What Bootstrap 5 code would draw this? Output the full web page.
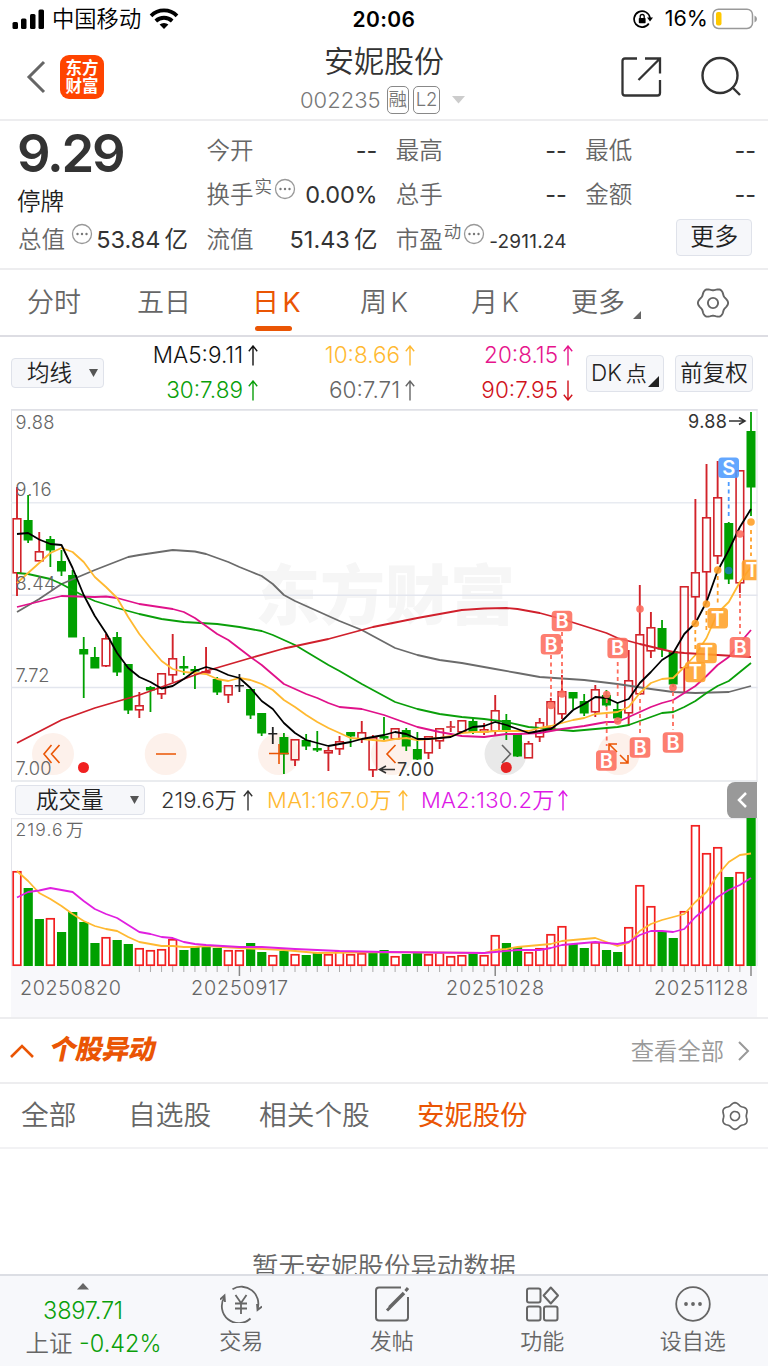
<!DOCTYPE html>
<html lang="zh-CN">
<head>
<meta charset="utf-8">
<meta name="viewport" content="width=device-width, initial-scale=1">
<title>安妮股份 002235</title>
<link href="https://cdn.jsdelivr.net/npm/bootstrap@5.3.0/dist/css/bootstrap.min.css" rel="stylesheet">
<style>
:root{--ink:#333;--mute:#666;--accent:#ea5504;--up:#d2232a;--down:#00a000}
body{width:768px;height:1366px;overflow:hidden;background:#fff;color:var(--ink);font-family:Inter,"Noto Sans CJK SC",sans-serif;font-weight:350;font-size:24px;line-height:1;white-space:nowrap}
svg{display:block;flex:none}
.status-row{height:38px;padding:0 10px 0 12px;color:#000;font-size:21px}
.side{width:250px}
.clock{font-weight:600;font-size:21px;letter-spacing:.4px;position:relative;left:-1px}
.title-row{height:83px;border-bottom:2px solid #ededef}
.logo{width:44px;height:44px;border-radius:9px;background:#ff4400;color:#fff;font-size:16.5px;line-height:18px;font-weight:700;padding-top:4px;margin-left:12px}
.logo span{display:block;height:18px}
.name{font-size:30px;line-height:34px}
.code{font-size:22px;letter-spacing:0;color:#777}
.tagbox{height:28px;border:1.5px solid #888;border-radius:5px;font-size:18.5px;color:#777;letter-spacing:0}
.quote{height:149px;border-bottom:2px solid #ededef;padding:7px 12px 0 18px;display:grid;grid-template-columns:170px 171px 171px 171px;column-gap:18.4px;grid-auto-flow:column;grid-template-rows:44.5px 44.5px 44.5px}
.quote>div{display:flex;align-items:center;justify-content:space-between}
.lbl{color:var(--mute);font-size:23.5px}
.num{font-size:23.5px;font-weight:400}
.big{font-size:52.5px;font-weight:600;letter-spacing:-2.2px;padding-top:6px;margin-left:-1px}
.sup{font-size:17.5px;color:var(--mute);position:relative;top:-8px;margin-left:1px}
.softbtn{border:1.5px solid #dfe2ea;background:#f6f7fa;border-radius:4px;color:#222}
.period{height:67px;border-bottom:2px solid #dddde3;padding-left:27px;font-size:27px;color:var(--mute);word-spacing:-4px}
.period .on{color:var(--accent);position:relative;font-weight:400}
.period .on::after{content:"";position:absolute;left:3px;bottom:-12px;width:37px;height:5.5px;border-radius:3px;background:var(--accent)}
.ma{width:469px;height:72px;display:grid;grid-template-columns:154px 157px 158px;grid-template-rows:35px 35px;padding-top:1px;font-size:22.5px;letter-spacing:0}
.ma>div{display:flex;align-items:center;justify-content:flex-end;gap:5px}
.volhead{height:36px;padding:0 11px 0 15px;font-size:22px}
.volhead .stat{display:flex;align-items:center;justify-content:space-between}
.sect{height:67px;border-top:2px solid #ededef;border-bottom:2px solid #ededef;padding:0 17px 0 10px}
.sect h2{font-size:27px;font-weight:900;color:var(--accent);transform:skewX(-12deg);letter-spacing:-.6px}
.news{height:65px;border-bottom:2px solid #f2f2f4;padding:0 18px 0 21px;font-size:27.7px;color:var(--mute)}
.empty{height:125px;padding-top:104px;overflow:hidden;color:var(--mute);font-size:26.4px}
.dock{height:93px;background:#f7f8fb;border-top:2px solid #dcdee4;color:var(--mute);font-size:22px}
.dock .item{width:150.5px;padding-top:9px}
.dock .item div{margin-top:7px}
.dock .idx{width:166px;padding-top:6px}
.chart text{font-family:Inter,"Noto Sans CJK SC",sans-serif;font-weight:400}
</style>
</head>
<body>
<svg width="0" height="0" class="position-absolute">
  <symbol id="up" viewBox="0 0 10 21"><path d="M5 20.5V1M.8 6.2 5 1l4.200 5.200" fill="none" stroke="currentColor" stroke-width="1.400"/></symbol>
  <symbol id="dn" viewBox="0 0 10 21"><path d="M5 .5V20M.8 14.800 5 20l4.200-5.200" fill="none" stroke="currentColor" stroke-width="1.400"/></symbol>
  <symbol id="more" viewBox="0 0 22 22"><circle cx="11" cy="11" r="9.500" fill="none" stroke="#999" stroke-width="1.300"/><g fill="#777"><circle cx="6.500" cy="11" r="1.200"/><circle cx="11" cy="11" r="1.200"/><circle cx="15.500" cy="11" r="1.200"/></g></symbol>
  <symbol id="gear" viewBox="-16 -16 32 32"><path id="gearPath" fill="none" stroke="currentColor" stroke-width="1.800"/><circle r="4.800" fill="none" stroke="currentColor" stroke-width="1.800"/></symbol>
</svg>

<header>
  <div class="status-row d-flex align-items-center justify-content-between">
    <div class="side d-flex align-items-center">
      <svg width="33" height="20" viewBox="0 0 33 20"><rect x=".5" y="13" width="5.500" height="7" rx="1.500"/><rect x="9" y="9.500" width="5.500" height="10.500" rx="1.500"/><rect x="18" y="5" width="5.500" height="15" rx="1.500"/><rect x="26.500" y=".5" width="5.500" height="19.500" rx="1.500"/></svg>
      <span style="font-size:22.300px;margin-left:7px">中国移动</span>
      <svg class="ms-2" width="30" height="22" viewBox="0 0 30 22"><g fill="none" stroke="#000" stroke-width="3.800"><path d="M2 7.800a18.500 18.500 0 0 1 26 0"/><path d="M6.800 13a12 12 0 0 1 16.400 0"/></g><path d="M10.600 16.600a6.600 6.600 0 0 1 8.800 0L15 21z"/></svg>
    </div>
    <div class="clock">20:06</div>
    <div class="side d-flex align-items-center justify-content-end">
      <svg width="20" height="18" viewBox="0 0 20 18"><path d="M15.800 13.500A8 8 0 1 1 17 8" fill="none" stroke="#000" stroke-width="1.700"/><path d="M14 7.500h6l-3 4z"/><rect x="5.800" y="8" width="6.800" height="5.300" rx=".7"/><path d="M7.200 8V6.500a2 2 0 0 1 4 0V8" fill="none" stroke="#000" stroke-width="1.300"/></svg>
      <span class="ms-2 ps-1" style="font-weight:400;font-size:21.500px">16%</span>
      <svg class="ms-1" width="46" height="22" viewBox="0 0 46 22"><rect x="1" y="1.200" width="39.500" height="19.300" rx="5.500" fill="none" stroke="#999" stroke-width="1.500"/><rect x="4" y="4" width="5.500" height="13.500" rx="2" fill="#ffc800"/><path d="M42.500 7.500q2.500 1 2.500 3.500t-2.500 3.500z" fill="#999"/></svg>
    </div>
  </div>
  <div class="title-row d-flex align-items-center justify-content-between ps-4 pe-4">
    <div class="d-flex align-items-center pb-1" style="width:220px">
      <svg width="24" height="36" viewBox="0 0 24 36"><path d="M20 3 5 18l15 15" fill="none" stroke="#666" stroke-width="3"/></svg>
      <div class="logo text-center"><span>东方</span><span>财富</span></div>
    </div>
    <div class="text-center">
      <div class="name">安妮股份</div>
      <div class="code d-flex align-items-center justify-content-center mt-2">002235
        <span class="tagbox d-flex align-items-center" style="padding:0 1px;margin-left:6px">融</span><span class="tagbox d-flex align-items-center justify-content-center ms-1" style="width:27px">L2</span>
        <svg class="ms-2" width="20" height="8" viewBox="0 0 20 8"><path d="M4 0h13l-6.500 7.500z" fill="#ccc"/></svg>
      </div>
    </div>
    <div class="d-flex align-items-center justify-content-end gap-4 pb-1" style="width:220px">
      <svg width="42" height="42" viewBox="0 0 42 42" fill="none" stroke="#333" stroke-width="2.300"><path d="M17 2.500H5Q2.500 2.500 2.500 5v32q0 2.500 2.500 2.500h32.500q2.500 0 2.500-2.500V24M25 2.500h15v15M40 2.500 18.500 24"/></svg>
      <svg style="margin:0 2px 0 14px" width="42" height="42" viewBox="0 0 42 42" fill="none" stroke="#333" stroke-width="2.400"><circle cx="20" cy="19.500" r="17.500"/><path d="m32 31 8 8"/></svg>
    </div>
  </div>
</header>

<section class="quote">
  <div class="big">9.29</div>
  <div style="color:#222;font-size:23.500px;padding-top:14px;margin-left:-1px">停牌</div>
  <div><span class="lbl">总值</span><svg style="margin:0 0 11px 6px" width="22" height="22"><use href="#more"/></svg><span class="num ms-auto">53.84<span class="ps-1">亿</span></span></div>
  <div><span class="lbl">今开</span><span class="num">--</span></div>
  <div><span class="lbl">换手</span><span class="sup">实</span><svg style="margin:0 0 11px 2px" width="22" height="22"><use href="#more"/></svg><span class="num ms-auto" style="letter-spacing:-.2px">0.00%</span></div>
  <div><span class="lbl">流值</span><span class="num">51.43<span class="ps-1">亿</span></span></div>
  <div><span class="lbl">最高</span><span class="num">--</span></div>
  <div><span class="lbl">总手</span><span class="num">--</span></div>
  <div><span class="lbl">市盈</span><span class="sup">动</span><svg style="margin:0 0 11px 2px" width="22" height="22"><use href="#more"/></svg><span class="num ms-auto pt-1" style="font-size:19px;letter-spacing:.2px">-2911.24</span></div>
  <div><span class="lbl">最低</span><span class="num">--</span></div>
  <div><span class="lbl">金额</span><span class="num">--</span></div>
  <div style="justify-content:flex-end"><span class="softbtn d-flex align-items-center justify-content-center me-1" style="width:76px;height:37px;margin-bottom:4px">更多</span></div>
</section>

<nav class="period d-flex align-items-center">
  <span style="width:110px">分时</span><span style="width:115px">五日</span><span style="width:108px"><span class="on">日 K</span></span><span style="width:111px">周 K</span><span style="width:100px">月 K</span><span>更多</span>
  <svg class="ms-2 mt-4" width="8" height="8"><path d="M8 0v8H0z" fill="#666"/></svg>
  <svg width="34" height="34" style="margin-left:55px"><use href="#gear"/></svg>
</nav>

<section class="d-flex align-items-center" style="height:72px;padding:0 11px">
  <span class="softbtn d-flex align-items-center justify-content-between" style="width:93px;height:30px;padding:0 4px 0 15px;font-size:22.500px">均线<svg width="11" height="9"><path d="M1 0h9l-4.500 8z" fill="#555"/></svg></span>
  <div class="ma">
    <div style="color:#111">MA5:9.11<svg width="10" height="21"><use href="#up"/></svg></div>
    <div style="color:#ffb931">10:8.66<svg width="10" height="21"><use href="#up"/></svg></div>
    <div style="color:#e6148c">20:8.15<svg width="10" height="21"><use href="#up"/></svg></div>
    <div style="color:#0a9f0a">30:7.89<svg width="10" height="21"><use href="#up"/></svg></div>
    <div style="color:#666">60:7.71<svg width="10" height="21"><use href="#up"/></svg></div>
    <div style="color:#d0121b">90:7.95<svg width="10" height="21"><use href="#dn"/></svg></div>
  </div>
  <span class="softbtn d-flex align-items-center position-relative" style="width:78px;height:37px;margin-left:13px;padding-left:4px;font-size:22.500px">DK<span style="font-size:21px;padding-left:4px">点</span><svg class="position-absolute bottom-0 end-0 mb-1 me-1" width="11" height="11"><path d="M11 0v11H0z" fill="#222"/></svg></span>
  <span class="softbtn d-flex align-items-center justify-content-center" style="width:78px;height:37px;margin-left:11px;font-size:22.500px">前复权</span>
</section>

<svg id="price" class="chart" width="768" height="373" viewBox="0 409 768 373"></svg>

<section class="volhead d-flex align-items-center">
  <span class="softbtn d-flex align-items-center justify-content-between" style="width:130px;height:30px;padding:0 4px 0 20px;font-size:22.500px">成交量<svg width="11" height="9"><path d="M1 0h9l-4.500 8z" fill="#555"/></svg></span>
  <span class="stat" style="margin-left:16px;width:92px">219.6万<svg width="10" height="21"><use href="#up"/></svg></span>
  <span class="stat" style="margin-left:14px;width:141px;letter-spacing:.35px;color:#ffb931">MA1:167.0万<svg width="10" height="21"><use href="#up"/></svg></span>
  <span class="stat" style="margin-left:13px;width:147px;letter-spacing:.25px;color:#dd18e6">MA2:130.2万<svg width="10" height="21"><use href="#up"/></svg></span>
  <span class="ms-auto d-flex align-items-center justify-content-center" style="width:30px;height:37px;background:#999;border-radius:8px 0 0 8px"><svg width="12" height="18"><path d="M10 2 3 9l7 7" fill="none" stroke="#fff" stroke-width="2.500"/></svg></span>
</section>

<svg id="volume" class="chart" width="768" height="199" viewBox="0 818 768 199"></svg>

<section class="sect d-flex align-items-center">
  <svg width="24" height="16" viewBox="0 0 24 16"><path d="m1 14 11-11 11 11" fill="none" stroke="#ea5504" stroke-width="2.600"/></svg>
  <h2 class="mb-0" style="margin-left:16px">个股异动</h2>
  <span class="ms-auto" style="color:#999;font-size:23.300px;padding-top:2px">查看全部</span>
  <svg style="margin-left:13px" width="14" height="22" viewBox="0 0 14 22"><path d="m2 2 9 9-9 9" fill="none" stroke="#999" stroke-width="2"/></svg>
</section>
<nav class="news d-flex align-items-center">
  <span style="width:107px">全部</span><span style="width:131px">自选股</span><span style="width:158px">相关个股</span><span style="color:var(--accent);font-weight:400">安妮股份</span>
  <svg class="ms-auto" width="30" height="30" viewBox="-16 -16 32 32"><use href="#gear" x="-16" y="-16" width="32" height="32" transform="rotate(30)"/></svg>
</nav>
<div class="empty text-center">暂无安妮股份异动数据</div>

<footer class="dock d-flex text-center">
  <div class="idx d-flex flex-column align-items-center" style="color:#0a9f0a">
    <svg width="14" height="8"><path d="M1 7.500 7 1l6 6.500z" fill="#666"/></svg>
    <div style="font-size:23.500px;letter-spacing:-.2px;margin-top:9px">3897.71</div>
    <div style="margin-top:9px;padding-left:21px;font-size:23.500px"><span style="color:#666">上证</span> -0.42%</div>
  </div>
  <div class="item d-flex flex-column align-items-center">
    <svg width="42" height="38" viewBox="0 0 42 38" fill="none" stroke="#666" stroke-width="1.800"><path d="M12.500 4.200A17 17 0 0 1 37.500 24M42 21.500l-4.500 3.500-.5-6M30.500 33.500A17 17 0 0 1 4.500 12M0 14.500l4.500-4 .5 6.500"/><path d="m15.500 10 5.500 8 5.500-8M21 18v11M15 18.500h12M15 23.500h12"/></svg>
    <div>交易</div></div>
  <div class="item d-flex flex-column align-items-center">
    <svg width="38" height="38" viewBox="0 0 38 38" fill="none" stroke="#666" stroke-width="2"><path d="M28 2.500H6Q3 2.500 3 5.500v27q0 3 3 3h26q3 0 3-3V12"/><path d="M16.500 22.500 31 8" stroke-width="3.600"/><path d="m14 25.500 3-3M32.500 6l2.500-3" stroke-width="3"/></svg>
    <div>发帖</div></div>
  <div class="item d-flex flex-column align-items-center">
    <svg width="38" height="38" viewBox="0 0 38 38" fill="none" stroke="#666" stroke-width="2"><rect x="4" y="3.500" width="13.500" height="14" rx="2"/><rect x="4" y="21.500" width="13.500" height="14" rx="2"/><rect x="21" y="21.500" width="13.500" height="14" rx="2"/><path d="M27.800 2.500 35 10.500l-7.200 8-7.200-8z" stroke-linejoin="round"/></svg>
    <div>功能</div></div>
  <div class="item d-flex flex-column align-items-center">
    <svg width="38" height="38" viewBox="0 0 38 38"><circle cx="19" cy="19" r="16.800" fill="none" stroke="#666" stroke-width="1.800"/><g fill="#666"><circle cx="12" cy="19" r="1.900"/><circle cx="19" cy="19" r="1.900"/><circle cx="26" cy="19" r="1.900"/></g></svg>
    <div>设自选</div></div>
</footer>

<script src="https://cdn.jsdelivr.net/npm/bootstrap@5.3.0/dist/js/bootstrap.bundle.min.js"></script>
<script>
const X = i => 17 + i * 734 / 66;
const RED = '#d2232a', GREEN = '#00a000';
const line = (x1, y1, x2, y2, c, w = 1.5, extra = '') => `<line x1="${x1}" y1="${y1}" x2="${x2}" y2="${y2}" stroke="${c}" stroke-width="${w}" ${extra}/>`;
const text = (x, y, s, size, c, len, extra = '') => `<text x="${x}" y="${y}" font-size="${size}" fill="${c}" textLength="${len}" ${extra}>${s}</text>`;
const curve = (s, c, w = 1.8) => `<polyline fill="none" stroke="${c}" stroke-width="${w}" stroke-linejoin="round" points="${s.trim().split(/\s+/).map(p => { const [i, y] = p.split(':'); return X(+i).toFixed(1) + ',' + y; }).join(' ')}"/>`;
const seq = a => a.split(' ').map((y, i) => i + ':' + y).join(' ');

// Candles: colour, body top, body bottom, high, low
const candles = `r518 573 487 596,g520 540 495 543,r551 561 532 561,g539 550 536 567,g561 571 550 576,g575 637 570 637,g649 654 637 698,g657 668 647 668,r638 666 634 667,g637 672 632 676,g664 710 664 714,r705 710 692 718,g687 690 686 712,r673 694 673 699,r658 675 634 682,g666 668 656 675,g669 671 666 689,r671 673 647 673,g679 692 677 695,r685 695 685 703,k685 686 674 692,g689 715 689 719,g713 733 713 736,k733 734 727 744,g737 754 733 774,r739 760 739 766,g740 746 734 750,g748 750 731 752,r750 753 747 771,r741 749 736 755,g732 736 732 747,r732 739 721 743,r737 770 735 777,g736 738 717 740,r728 739 728 739,g730 746 728 751,g749 759 732 760,r736 753 736 759,r728 741 728 749,r727 728 721 732,r720 732 720 732,g721 732 718 734,r729 732 723 735,r710 731 695 736,g720 730 714 740,g733 756 733 757,r743 758 741 758,r722 737 718 742,r701 728 698 728,r691 714 675 719,g692 698 692 709,g701 713 694 716,r689 712 685 717,g695 705 690 707,g709 718 703 720,r680 713 650 726,r634 694 585 695,r627 651 612 658,g628 649 620 657,g651 684 651 687,r586 668 586 693,r572 597 499 620,r517 572 464 602,r497 556 461 564,g523 579 522 584,r470 583 470 593,g431 487 412 516`.split(',');

let s = '<path d="M11.5 782V409M757 782V409" stroke="#e2e3e9" fill="none"/>';
s += `<text x="255" y="619" font-size="65" textLength="260" fill="#f6f6f6" style="font-weight:900">东方财富</text>`;
[[409.800, '#dfe0e6', 2], [502.800, '#e8ebf1', 1.500], [595.300, '#e3e6ee', 1.500], [687.500, '#e3e6ee', 1.500], [781, '#e3e6ea', 1.500]].forEach(g => s += line(11, g[0], 757.500, g[0], g[1], g[2]));
[53, 165.700, 279, 392, 618.500].forEach(x => s += `<circle cx="${x}" cy="754" r="21" fill="#fdf1eb"/>`);
s += '<circle cx="505.500" cy="754" r="21" fill="#e9e9e9"/>';
candles.forEach((d, i) => {
  const [t, b, h, l] = d.slice(1).split(' ').map(Number), c = { r: RED, g: GREEN, k: '#222' }[d[0]], x = X(i);
  if (d[0] === 'r') {
    s += line(x, h, x, t, c, 1.900) + line(x, b, x, l, c, 1.900);
    s += b - t < 2 ? line(x - 4.500, t, x + 4.500, t, c) : `<rect x="${x - 3.8}" y="${t + .8}" width="7.600" height="${Math.max(b - t - 1, 1)}" fill="none" stroke="${c}" stroke-width="1.600"/>`;
  } else s += line(x, h, x, l, c, 1.800) + `<rect x="${x - 4.5}" y="${t}" width="9" height="${b - t + .5}" fill="${c}"/>`;
});
// Moving averages 60 / 30 / 20 / 10 / 90 / 5
s += curve('0:612 2:599 4:584 7:570 10:557 11:555 14:550 16:551.500 17:554 19:562 20:567 21:571.500 22:576 23:584 24:595 25:601 29:621 31:630 34:648 36:655 38:660 40:663 43:669 45:673 47:677 51:680 54:684 57:689 59:692 61:693 64:692 66:686', '#6b6b6b');
s += curve('0:573 1:574 3:579 4:584 6:596 7:601 9:608 11:614 13:619 15:622 18:624 20:627 21:629 22:631 23:635 24:640 25:645 28:665 29:671 31:684 34:702 36:709 38:714 40:717 42:719 44:722 46:727 48:729 50:731 52:729 54:727 55:725 57:717 58:713 59:712 60:707 61:701 62:693 63:686 64:681 65:672 66:663', '#0a9f0a');
s += curve('0:607 4:596 7:597 8:596.500 9:598 11:604 14:609 15:612 16:618 18:634 19:640 21:657 22:665 24:684 26:694 27:698 28:703 29:707 31:709 33:715 34:719 36:727 38:732 40:736 42:737 44:734 45:734 47:733 49:729 51:726 53:722 54:722 55:717 57:707 58:703 59:700 60:693 61:686 62:676 63:665 64:657 65:643 66:630', '#e0128a');
s += curve(seq('583 573 563 553 548 552 562 577 587 598 617 634 648 661 669 672 673 674 679 681 678 680 684 690 700 707 715 722 728 733 738 739 740 741 739 738 740 739 738 736 733 732 732 731 731 731 731 728 726 723 720 718 714 713 712 707 693 683 679 678 667 655 638 613 602 582 567'), '#ffb931');
s += curve('0:743 4:720 7:708 11:695 14:683 17:671 21:658 24:648.500 28:639 32:627 36:618 38:614 40:610 42:608.500 44:608 45:609 47:613 49:619 51:626 53:633 54:638 56:644 59:652 60:653 63:655 66:657', '#d0202c');
s += curve(seq('534 533 539.5 544 545 568 595 616 633 653 668 677 682 688.5 686 679 671 667 670 675 678 688 701 709 723 733 740 743 746 744 742 739 737 735 732 734 739 739 738 737 732 727 726 722 725 729 733 731 729 721 710 704 697 698 703 699 683 672 660 653 634 623 602 571 550 527 509'), '#000');
// Round chart controls
s += `<g fill="none" stroke="#ea5504" stroke-width="1.600"><path d="m51.500 745-7.500 9 7.500 9M59.500 745l-8 9 8 9M156 754h20M269 753.500h20M279 744v20M395.500 745l-8.500 9 8.500 9M609 751v-7h8M609 744l8 8M628 755v8h-8M628 763l-8-8"/></g><path d="m502 745 8.500 9-8.500 9" fill="none" stroke="#666" stroke-width="1.600"/>`;
s += '<circle cx="83.500" cy="767.500" r="5.500" fill="#f02020"/><circle cx="506.300" cy="767.500" r="5.500" fill="#e62222"/>';
// Price labels
[[429, '9.88', 39], [496, '9.16', 36], [590, '8.44', 40], [682, '7.72', 34], [775, '7.00', 36]].forEach(a => s += text(15.500, a[0], a[1], 18.300, '#666', a[2], 'style="font-weight:350"'));
s += text(688, 427.500, '9.88', 18, '#333', 39) + '<path d="M729 421h15M739 417.500l6 3.500-6 3.500" stroke="#333" stroke-width="1.500" fill="none"/>';
s += text(397, 776, '7.00', 18, '#333', 37) + '<path d="M395 769.500h-14M386 766l-6.500 3.500 6.500 3.500" stroke="#333" stroke-width="1.500" fill="none"/>';
// Signal badges
const CB = '#fd6c5c', CT = '#ffa028', CS = '#4d9bff';
[[551, 655, 701, CB], [562, 632, 691, CB], [617.700, 662, 697, CB], [606.700, 699, 746, CB], [640, 699, 735, CB], [673, 692, 730, CB], [740, 594, 634, CB], [751, 530, 556, CT], [717.700, 576, 605, CT], [706.400, 611, 632, CT], [695.300, 630, 652, CT], [728.700, 482, 517, CS]].forEach(a => s += line(a[0], a[1], a[0], a[2], a[3], 1.800, 'stroke-dasharray="4 3.500"'));
[[551, 705.500, CB], [562, 694, CB], [606.700, 694.500, CB], [617.700, 721, CB], [640, 609, CB], [673, 687.500, CB], [740, 534, CB], [751, 522, CT], [717.700, 570, CT], [706.400, 604, CT], [695.300, 623.500, CT], [728.700, 570.500, '#1b7fae']].forEach(a => s += `<circle cx="${a[0]}" cy="${a[1]}" r="3.800" fill="${a[2]}" opacity=".9"/>`);
s += '<clipPath id="plot"><rect x="0" y="409" width="756.500" height="373"/></clipPath>';
[[562, 621, 'B'], [551, 644.300, 'B'], [617.700, 648, 'B'], [606.300, 760.500, 'B'], [640, 747.500, 'B'], [673, 742.500, 'B'], [740, 647.300, 'B'], [717.700, 618.300, 'T'], [695.300, 672, 'T'], [706.500, 653, 'T'], [752, 570, 'T'], [728.700, 467.700, 'S']].forEach(a => {
  const c = { B: CB, T: CT, S: CS }[a[2]];
  s += `<g clip-path="url(#plot)"><rect x="${a[0] - 10.3}" y="${a[1] - 10.3}" width="20.600" height="20.600" rx="3.500" fill="${c}" opacity=".88"/><text x="${a[0]}" y="${a[1] + 7.3}" text-anchor="middle" font-size="20" fill="#fff" style="font-weight:600">${a[2]}</text></g>`;
});
document.getElementById('price').innerHTML = s;

// Volume bars: colour + top edge
const vols = 'r871 g888 g919 r918 g932 g912 g922 g943 r937 g940 g944 r948 r950 r949 r939 g950 g947 g946 g948 r950 r950 g943 g952 r955 g951 r954 g955 g953 r954 r951 r954 r953 g953 g950 r956 g954 g953 r954 r952 r956 r955 g954 r955 r935 g943 g947 r952 r948 r934 r926 g944 g948 r942 g950 g952 r927 r885 r906 g931 g938 r911 r825 r853 r847 g877 r872 g818'.split(' ');
let v = '<rect x="11" y="966" width="746" height="51" fill="#f8f8fb"/>' + line(11, 818.500, 757.500, 818.500, '#ebebef') + '<path d="M11.500 818v148M757 818v148" stroke="#e2e3e9"/>';
v += text(15.500, 836, '219.6', 17.500, '#666', 47, 'style="font-weight:350"') + text(66, 836, '万', 17.500, '#666', 17, 'style="font-weight:350"');
vols.forEach((d, i) => {
  const y = +d.slice(1), x = X(i);
  v += d[0] === 'r' ? `<rect x="${x - 3.8}" y="${y + .8}" width="7.600" height="${965.2 - y - .8}" fill="#fff" stroke="#f22020" stroke-width="1.700"/>` : `<rect x="${x - 4.5}" y="${y}" width="9.200" height="${966 - y}" fill="${GREEN}"/>`;
  if (i > 10) v += [20, 43, 66].includes(i) ? line(x, 966, x, 976, '#888', 1.500) : line(x, 966, x, 972, '#aaa', 1);
});
v += curve('0:871 1:881 2:893 3:899 4:906 5:914 6:921 7:926 8:929 9:931 10:937 11:942 12:944 13:946 14:946 15:947 16:947 17:946 20:948 24:950 26:952 27:953 33:952 42:953 43:950 44:949 45:947 46:946 47:945 48:944 49:941 50:940 51:939 52:938 53:942 54:946 55:943 56:931 57:924 58:920 59:917 60:914 61:902 62:892 63:875 64:862 65:855 66:853.500', '#ffb931');
v += curve('0:897.500 1:892 2:890.500 3:888 4:890 5:892 6:901 7:909 8:914 9:918 10:925 11:932 12:934 13:937 14:938 15:942 16:944 17:945 20:947 22:947 25:949 29:951 33:952 42:953 43:952 45:950 47:950 48:948 49:945 50:944 52:942 54:944 55:942 56:935 57:931 58:931 59:932 60:929 61:917 62:908 63:897 64:890 65:885 66:878', '#e020e0');
[[20, '20250820', 101], [191, '20250917', 97], [446, '20251028', 98], [654, '20251128', 94]].forEach(a => v += text(a[0], 995, a[1], 19.800, '#666', a[2], 'style="font-weight:350"'));
document.getElementById('volume').innerHTML = v;

// Six-lobed gear outline
let p = '';
for (let a = 0; a < 360; a += 4) {
  const t = a * Math.PI / 180, r = 13.1 + 1.1 * Math.cos(6 * t);
  p += (a ? 'L' : 'M') + (r * Math.cos(t)).toFixed(2) + ' ' + (r * Math.sin(t)).toFixed(2);
}
document.getElementById('gearPath').setAttribute('d', p + 'Z');
</script>
</body>
</html>
